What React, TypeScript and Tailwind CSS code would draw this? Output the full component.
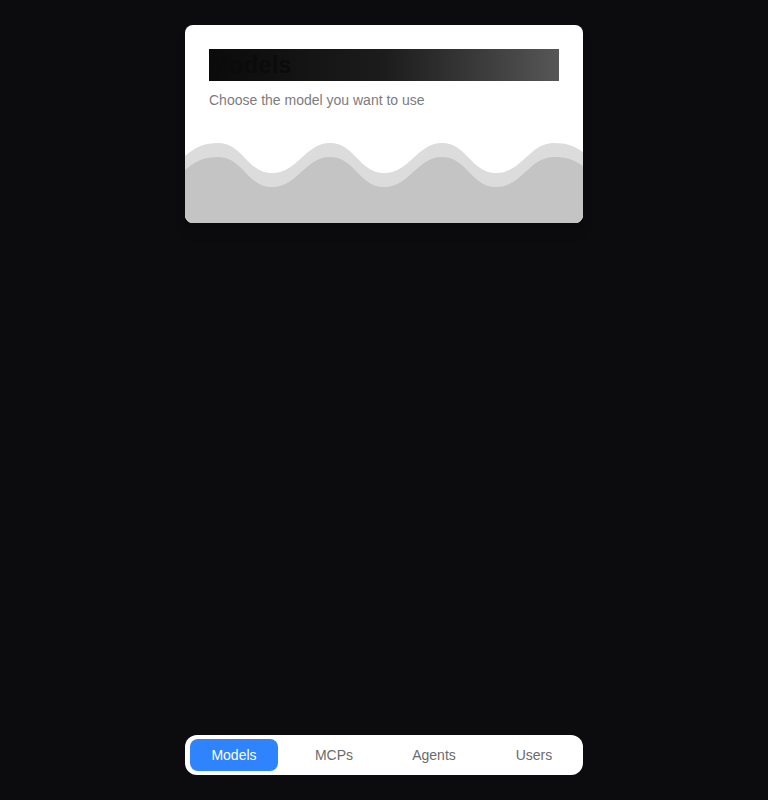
export default function App() {
  return (
    <div
      className="flex h-[800px] flex-col items-center justify-between bg-[#0c0c0e] py-[25px]"
      style={{ fontFamily: '"Liberation Sans", Arial, sans-serif' }}
    >
      <ModelsCard />
      <BottomNav />
    </div>
  );
}

function ModelsCard() {
  return (
    <div className="w-[398px] overflow-hidden rounded-lg bg-white shadow-lg">
      <div className="px-6 pt-6">
        <h1 className="h-8 bg-gradient-to-r from-[#0b0b0b] via-[#1c1c1c] via-50% to-[#575757] text-2xl font-bold leading-8 text-[#0b0b0b]">
          Models
        </h1>
        <p className="mt-[9px] text-sm text-[#7c7c7c]">Choose the model you want to use</p>
      </div>
      <Wave />
    </div>
  );
}

function Wave() {
  const d =
    "M0,16 C12,6 20,3 33,3 C58,3 62,33 87,33 C113,33 120,3 145,3 C170,3 174,33 199,33 C225,33 232,3 257,3 C282,3 286,33 311,33 C337,33 344,3 369,3 C385,3 392,8 398,12 L398,90 L0,90 Z";
  return (
    <svg className="mt-[30px] block" width="398" height="83" viewBox="0 0 398 83">
      <path d={d} fill="#dcdcdc" />
      <path d={d} fill="#c4c4c4" transform="translate(0,14)" />
    </svg>
  );
}

function BottomNav() {
  const items = ["Models", "MCPs", "Agents", "Users"];
  return (
    <nav className="grid w-[398px] grid-cols-4 gap-3 rounded-xl bg-white p-[4px_5px]">
      {items.map((item, i) => (
        <button
          key={item}
          className={`h-8 rounded-lg text-sm ${
            i === 0 ? "bg-[#2f83fc] text-white" : "text-[#6b6b6b]"
          }`}
        >
          {item}
        </button>
      ))}
    </nav>
  );
}
